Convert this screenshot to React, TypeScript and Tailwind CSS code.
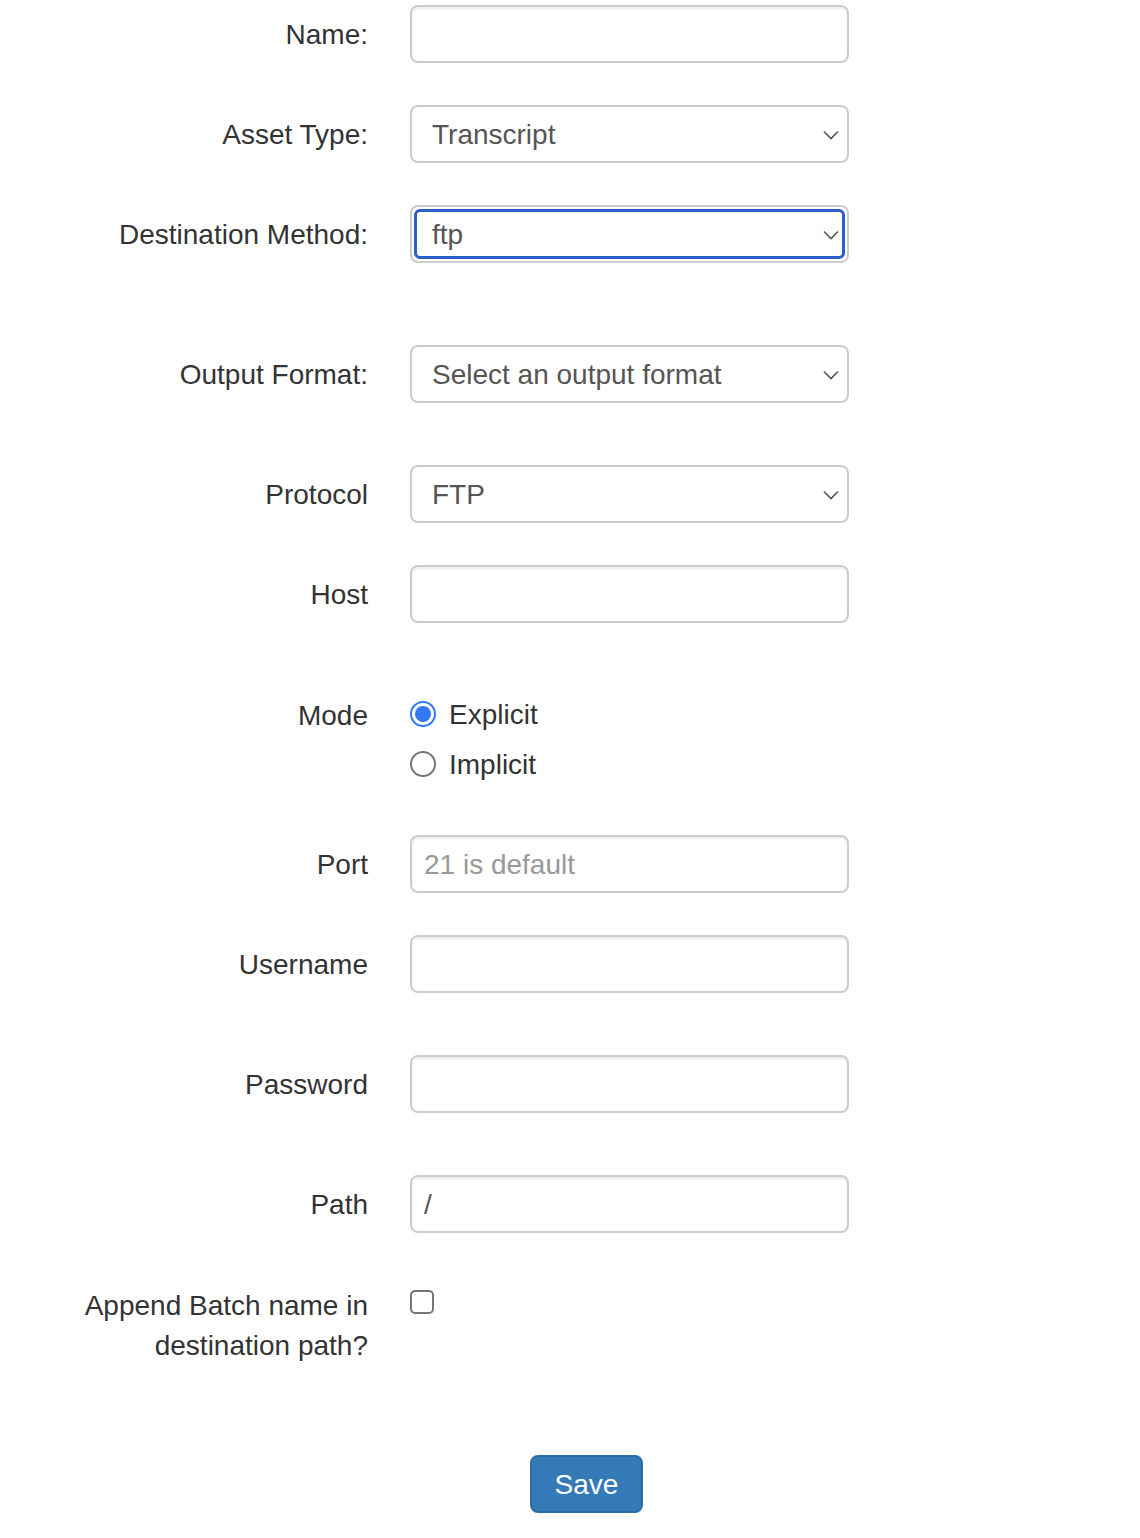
import { ReactNode } from "react";

// label column on the left, control on the right
const Row = ({ label, className, children }: { label: ReactNode; className?: string; children: ReactNode }) => (
  <div className={`flex items-center ${className ?? ""}`}>
    <label className="w-[368px] shrink-0 pt-[2px] text-right leading-[40px] text-[#333]">{label}</label>
    <div className="ml-[42px] w-[439px]">{children}</div>
  </div>
);

const TextInput = ({ value, placeholder }: { value?: string; placeholder?: string }) => (
  <input
    type="text"
    defaultValue={value}
    placeholder={placeholder}
    className="block h-[58px] w-full rounded-[8px] border-2 border-[#ccc] bg-white px-[12px] pt-[2px] text-[28px] text-[#555] shadow-[inset_0_2px_2px_rgba(0,0,0,0.075)] outline-none placeholder:text-[#999]"
  />
);

const Select = ({ value, focused }: { value: string; focused?: boolean }) => (
  <div className="relative h-[58px] w-full rounded-[8px] border-2 border-[#ccc] bg-white">
    {focused && (
      // focus ring sits inside the grey border
      <div className="absolute inset-x-[2px] top-[2px] bottom-[2px] rounded-[6px] border-[3px] border-[#2d5fc9]" />
    )}
    <div className="flex h-full items-center px-[20px] pt-[2px] text-[28px] text-[#555]">{value}</div>
    <Chevron />
  </div>
);

const Chevron = () => (
  <svg className="absolute right-[8px] top-[23px]" width={16} height={10} viewBox="0 0 16 10" fill="none">
    <path d="M1 1.5 8 8.5 15 1.5" stroke="#555" strokeWidth={1.6} />
  </svg>
);

const Radio = ({ checked, label }: { checked?: boolean; label: string }) => (
  <div className="flex h-[50px] items-center">
    {checked ? (
      <span className="grid h-[26px] w-[26px] place-content-center rounded-full border-2 border-[#3478f6] bg-white">
        <span className="h-[16px] w-[16px] rounded-full bg-[#3478f6]" />
      </span>
    ) : (
      <span className="h-[26px] w-[26px] rounded-full border-2 border-[#767676] bg-white" />
    )}
    <span className="ml-[13px] pt-[2px] text-[#333]">{label}</span>
  </div>
);

export default function App() {
  return (
    <div className="min-h-[1538px] bg-white pt-[5px] text-[28px] font-['Liberation_Sans',Arial,sans-serif]">
      <Row label="Name:">
        <TextInput />
      </Row>
      <Row label="Asset Type:" className="mt-[42px]">
        <Select value="Transcript" />
      </Row>
      <Row label="Destination Method:" className="mt-[42px]">
        <Select value="ftp" focused />
      </Row>
      <Row label="Output Format:" className="mt-[82px]">
        <Select value="Select an output format" />
      </Row>
      <Row label="Protocol" className="mt-[62px]">
        <Select value="FTP" />
      </Row>
      <Row label="Host" className="mt-[42px]">
        <TextInput />
      </Row>

      {/* mode radios */}
      <div className="mt-[66px] flex items-start">
        <label className="w-[368px] shrink-0 pt-[7px] text-right leading-[40px] text-[#333]">Mode</label>
        <div className="ml-[42px]">
          <Radio checked label="Explicit" />
          <Radio label="Implicit" />
        </div>
      </div>

      <Row label="Port" className="mt-[46px]">
        <TextInput placeholder="21 is default" />
      </Row>
      <Row label="Username" className="mt-[42px]">
        <TextInput />
      </Row>
      <Row label="Password" className="mt-[62px]">
        <TextInput />
      </Row>
      <Row label="Path" className="mt-[62px]">
        <TextInput value="/" />
      </Row>

      {/* append checkbox */}
      <div className="mt-[51px] flex items-start">
        <label className="w-[368px] shrink-0 pt-[2px] text-right leading-[40px] text-[#333]">
          Append Batch name in
          <br />
          destination path?
        </label>
        <div className="ml-[42px] pt-[6px]">
          <span className="block h-[24px] w-[24px] rounded-[5px] border-2 border-[#767676] bg-white" />
        </div>
      </div>

      <div className="mt-[89px] pl-[530px]">
        <button className="h-[58px] w-[113px] rounded-[8px] border-2 border-[#2e6da4] bg-[#337ab7] pt-[2px] text-[28px] text-white">
          Save
        </button>
      </div>
    </div>
  );
}
